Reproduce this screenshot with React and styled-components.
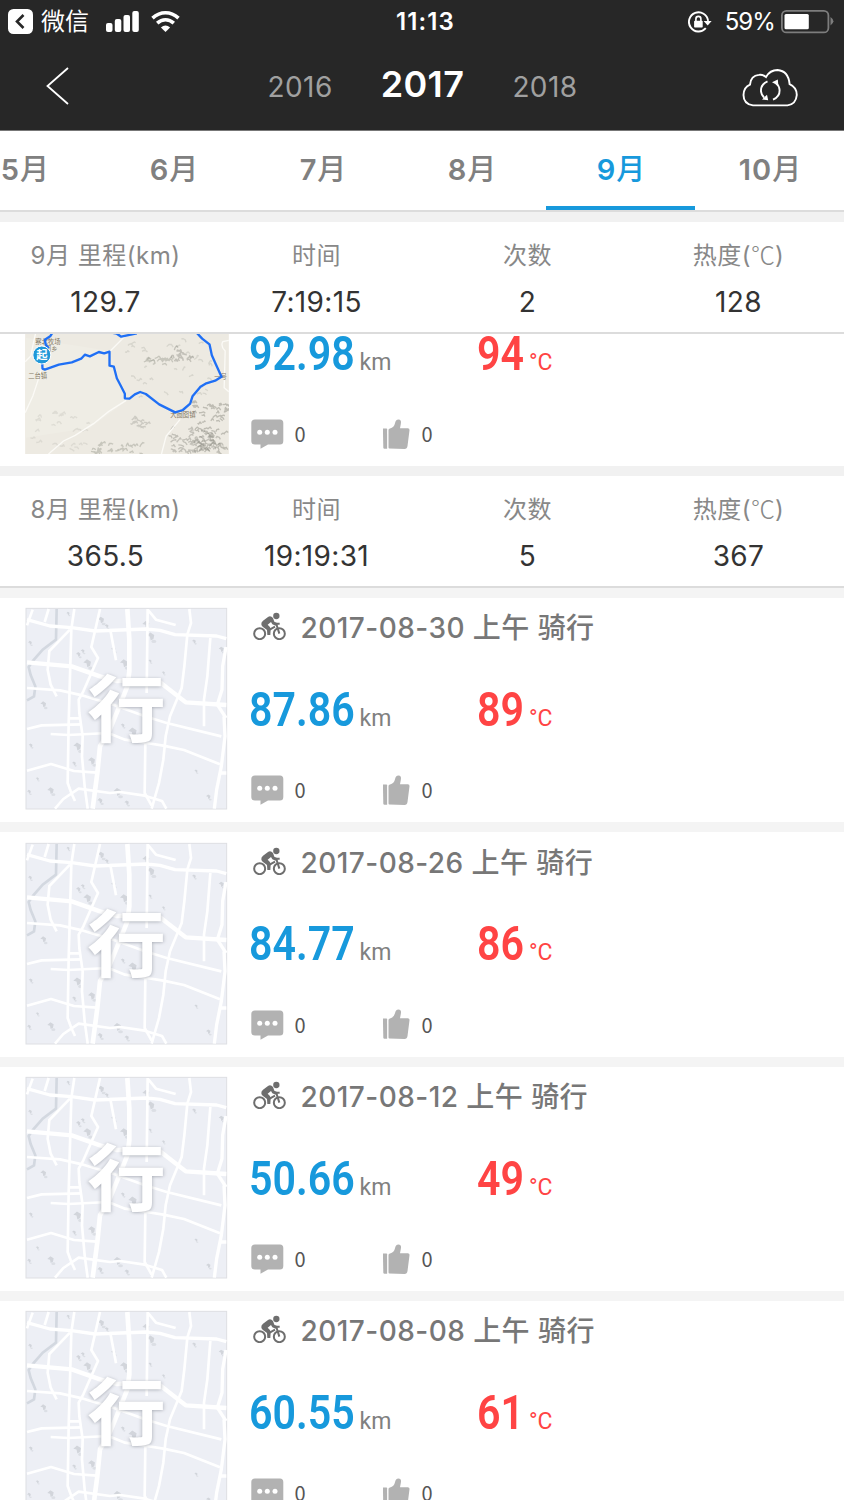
import styled, { createGlobalStyle } from 'styled-components';

const GlobalStyle = createGlobalStyle`
    * {
        box-sizing: border-box;
    }
    body {
        margin: 0;
        background: #fff;
        font-family: Inter, "Noto Sans CJK SC", sans-serif;
    }
    svg {
        display: block;
        flex-shrink: 0;
    }
`;

const Screen = styled.div`
    display: flex;
    flex-direction: column;
    width: 844px;
    height: 1500px;
    overflow: hidden;
    background: #fff;
`;

const DarkHeader = styled.header`
    height: 131px;
    background: #272727;
    border-bottom: 1px solid #777;
    color: #fff;
`;

const StatusBar = styled.div`
    display: grid;
    grid-template-columns: 1fr auto 1fr;
    align-items: center;
    height: 43px;
    padding: 0 10px 0 8px;
    font-size: 24px;
    line-height: 30px;
`;

const StatusSide = styled.div`
    display: flex;
    align-items: center;
    justify-content: ${(p) => (p.$end ? 'flex-end' : 'flex-start')};
`;

const BackApp = styled.span`
    margin: 0 17px 0 8px;
    font-weight: 400;
`;

const Clock = styled.span`
    padding-left: 9px;
    font-weight: 600;
    font-size: 24px;
    letter-spacing: 1.1px;
`;

const Percent = styled.span`
    margin: 0 6px 0 13px;
    font-size: 24px;
    letter-spacing: -0.9px;
`;

const NavBar = styled.nav`
    display: flex;
    align-items: center;
    justify-content: space-between;
    height: 86px;
    padding: 0 46px;
`;

const Years = styled.div`
    display: flex;
    align-items: baseline;
    gap: 48px;
    margin-left: 34px;
    margin-top: -1px;
`;

const Year = styled.span`
    font-size: ${(p) => (p.$active ? 36 : 28)}px;
    font-weight: ${(p) => (p.$active ? 600 : 400)};
    color: ${(p) => (p.$active ? '#fff' : '#a0a0a0')};
    letter-spacing: 0.4px;
    line-height: 42px;
`;

const MonthTabs = styled.div`
    display: flex;
    flex-shrink: 0;
    height: 81px;
    margin-left: -50px;
    border-bottom: 2px solid #dcdcdc;
`;

const MonthTab = styled.div`
    flex: 0 0 149px;
    padding: 21px 0 0 2px;
    border-bottom: 4px solid ${(p) => (p.$active ? '#1799dc' : 'transparent')};
    color: ${(p) => (p.$active ? '#1799dc' : '#808080')};
    font-size: 29px;
    font-weight: 600;
    line-height: 36px;
    text-align: center;
    letter-spacing: 1px;
`;

const MonthUnit = styled.span`
    font-weight: 500;
    font-size: 29px;
`;

const Gap = styled.div`
    flex-shrink: 0;
    height: 10px;
    background: ${(p) => (p.$light ? '#f4f4f4' : '#f1f1f1')};
`;

const SummaryPanel = styled.section`
    display: grid;
    grid-template-columns: repeat(4, 1fr);
    flex-shrink: 0;
    height: 112px;
    padding-top: 19px;
    border-bottom: 2px solid #dcdcdc;
    text-align: center;
`;

const SummaryLabel = styled.div`
    height: 30px;
    font-size: 24px;
    line-height: 30px;
    letter-spacing: 0.5px;
    color: #888;
    white-space: nowrap;
`;

const Degree = styled.span`
    font-family: "Noto Sans CJK SC", sans-serif;
    font-weight: 300;
    letter-spacing: 0;
    line-height: 1;
`;

const SummaryValue = styled.div`
    margin-top: 14px;
    font-size: 28px;
    line-height: 35px;
    letter-spacing: 0.35px;
    color: #333;
`;

const RideList = styled.main`
    flex: 1;
    min-height: 0;
    overflow: hidden;
`;

const ScrolledContent = styled.div`
    margin-top: -92.4px;
`;

const RideRow = styled.article`
    display: flex;
    height: 224.33px;
    padding: 9.5px 0 0 25px;
    background: #fff;
`;

const RideInfo = styled.div`
    margin: -1px 0 0 21px;
`;

const RideTitle = styled.div`
    display: flex;
    align-items: center;
    gap: 14.5px;
    height: 40px;
    padding-left: 4px;
    font-size: 28px;
    font-weight: 500;
    letter-spacing: 0.45px;
    color: #777;
    white-space: nowrap;
`;

const Stats = styled.div`
    display: grid;
    grid-template-columns: 111px 117px 53px auto;
    align-items: baseline;
    margin-top: 38.5px;
    height: 50px;
    font-family: Roboto, sans-serif;
    line-height: 50px;
`;

const BigNumber = styled.span`
    transform: scaleX(0.84);
    transform-origin: left;
    font-size: 49px;
    font-weight: 650;
    color: ${(p) => (p.$hot ? '#ff4444' : '#1799dc')};
    white-space: nowrap;
`;

const Unit = styled.span`
    margin-left: ${(p) => (p.$hot ? -1 : -0.5)}px;
    font-size: 23px;
    color: ${(p) => (p.$hot ? '#ff4444' : '#808080')};
`;

const Counts = styled.div`
    display: grid;
    grid-template-columns: 43.5px 88.5px 38.5px auto;
    align-items: center;
    margin-top: 39.5px;
    height: 32px;
    padding-left: 2px;
    font-family: "Noto Sans CJK SC", sans-serif;
    font-size: 20px;
    line-height: 32px;
    color: #555;
`;

const CityGlyph = styled.text`
    font-family: "Noto Sans CJK SC", sans-serif;
    font-size: 236px;
    font-weight: 700;
    fill: #fff;
    filter: drop-shadow(0 2px 6px rgba(110, 115, 125, 0.55));
`;

const MapLabel = styled.text`
    font-family: "Noto Sans CJK SC", sans-serif;
    font-size: 19px;
    fill: #857a66;
`;

const PinLabel = styled.text`
    font-family: "Noto Sans CJK SC", sans-serif;
    font-size: 34px;
    font-weight: 700;
    fill: #fff;
`;

// small repeatable generator for the hill shading
const makeHills = (seed, count, x, y, w, h) => {
    let s = seed;
    const next = () => {
        s = (s * 16807) % 2147483647;
        return s / 2147483647;
    };
    next();
    next();
    return Array.from({ length: count }, () => {
        const px = x + next() * w;
        const py = y + next() * h;
        const step = () => `l${(1 + next() * 7).toFixed(1)} ${(3 - next() * 10).toFixed(1)}`;
        return `M${px.toFixed(1)} ${py.toFixed(1)}${step()}${step()}l${(2 + next() * 3).toFixed(1)} ${(2 + next() * 6).toFixed(1)}`;
    }).join('');
};

const HILLS = [
    { d: makeHills(11011, 75, 575, 235, 100, 150), o: 0.4 },
    { d: makeHills(29017, 60, 505, 315, 160, 70), o: 0.36 },
    { d: makeHills(47051, 26, 270, 362, 150, 26), o: 0.32 },
    { d: makeHills(53077, 16, 510, 75, 90, 36), o: 0.36 },
    { d: makeHills(61031, 14, 430, 100, 80, 22), o: 0.32 },
    { d: makeHills(71093, 14, 390, 285, 80, 26), o: 0.28 },
    { d: makeHills(83047, 26, 90, 265, 170, 110), o: 0.14 },
    { d: makeHills(97003, 34, 370, 40, 260, 180), o: 0.18 },
];

const RouteMap = () => (
    <svg width="204" height="203" viewBox="75 -220 611 609" style={{ marginRight: -1 }}>
        <rect x="75" y="-220" width="611" height="609" fill="#edeae2" />
        <path d="M75 40L330 80L380 230L270 310L75 340Z" fill="#efede5" />
        {HILLS.map((hill) => (
            <path key={hill.d} d={hill.d} fill="none" stroke="#77786e" strokeWidth="4" opacity={hill.o} strokeLinejoin="round" />
        ))}
        <g fill="none" stroke="#fbfaf6" strokeWidth="4">
            <path d="M108 20Q98 60 92 95L75 112M125 130Q112 175 98 215L75 265" />
            <path d="M145 389L190 350L225 333L280 298L325 262L378 228M328 82L375 35" />
            <path d="M540 285L498 335L484 389M686 202L672 190L675 80Q660 65 668 52L686 48" />
        </g>
        <MapLabel x="105" y="58">察北牧场</MapLabel>
        <MapLabel x="134" y="79">图乡</MapLabel>
        <MapLabel x="84" y="162">二台镇</MapLabel>
        <MapLabel x="510" y="278">大囫囵镇</MapLabel>
        <MapLabel x="642" y="164">一号</MapLabel>
        <g fill="none" stroke="#1f6ff5" strokeWidth="7" strokeLinejoin="round">
            <path d="M160 20L150 36L134 46L137 62L146 72" />
            <path d="M126 112L127 133L134 136L176 121L215 114L243 103L254 91L269 96L296 83L312 87L328 82L328 124L341 127L350 162L361 183L374 208L374 222L388 223L404 210L420 203L437 209L477 240L525 264L548 257L570 238L577 216L601 187L616 178L645 169L664 157L647 120L635 93L628 60L606 43L580 15" />
            <path d="M330 24L350 28L363 37L410 27" />
        </g>
        <circle cx="125" cy="92" r="27" fill="#1f97d8" stroke="#fff" strokeWidth="3" />
        <PinLabel x="108" y="105">起</PinLabel>
    </svg>
);

const PATCHES = [
    [303, 92, 10], [438, 106, 11], [452, 142, 12], [340, 180, 7], [262, 222, 12], [372, 222, 12],
    [320, 110, 6], [582, 156, 6], [664, 180, 8], [90, 160, 6], [130, 345, 9], [398, 428, 13],
    [368, 408, 6], [232, 472, 12], [275, 515, 11], [222, 522, 6], [92, 468, 6], [112, 568, 5],
    [152, 604, 10], [352, 608, 12], [300, 634, 8], [380, 640, 7], [588, 545, 5], [625, 622, 7],
    [87, 607, 6], [235, 195, 7], [450, 215, 5], [204, 72, 5], [490, 250, 5], [248, 185, 6],
];

const CityMap = () => (
    <svg width="203" height="203" viewBox="75 52 609 609">
        <rect x="78" y="56" width="602" height="602" fill="#edeff5" stroke="#dedfe3" strokeWidth="3" />
        <g fill="#c9cdd3" opacity="0.75">
            {PATCHES.map(([x, y, r]) => (
                <path key={`${x}-${y}`} d={`M${x - r} ${y - r * 0.3}l${r * 0.9} ${-r * 0.8}l${r} ${r * 0.6}l${-r * 0.2} ${r}l${-r * 0.7} ${r * 0.4}l${-r * 0.2} ${-r}z`} />
            ))}
        </g>
        <g fill="#dcdfe5">
            {PATCHES.map(([x, y, r]) => (
                <ellipse key={`${x}-${y}`} cx={x + r * 0.8} cy={y + r * 1.1} rx={r * 0.6} ry={r * 0.4} />
            ))}
        </g>
        <path d="M170 58L168 150L128 180L100 212L86 232L92 256L106 290L102 320L81 332" fill="none" stroke="#d3d8e0" strokeWidth="8" />
        <g fill="none" stroke="#fff" strokeWidth="8" strokeLinejoin="round">
            <path d="M81 90L150 109L215 114L285 124L440 118L480 122L525 135L650 139L679 147" strokeWidth="10" />
            <path d="M98 60L81 107M146 58L134 97M223 58L214 118L206 400L203 580L214 610L225 634" />
            <path d="M210 120L148 184L143 240L152 285L170 320" />
            <path d="M300 58L285 124L274 172L294 205L250 305L236 330L238 370L248 440L246 500L254 590L263 657" />
            <path d="M382 58L388 150L388 245L382 290L350 370L325 430L300 470L292 550L278 657" strokeWidth="14" />
            <path d="M332 126L348 212M443 58L440 310M445 62L468 90L527 106" />
            <path d="M568 58L573 100L562 135L553 230L545 295L510 380L497 440L490 510L477 580L455 657" />
            <path d="M631 145L622 260L612 330L612 410" />
            <path d="M81 218L215 230L300 260L350 274L400 272L480 278L557 338L679 346" strokeWidth="13" />
            <path d="M81 295L180 302L250 318L340 345L435 380L500 400L664 440" />
            <path d="M81 418L125 407L245 404M210 386H242M152 433L205 436L325 430L375 450L440 460L490 468L552 481L660 524" />
            <path d="M81 543L153 523L222 544L290 549M436 460L434 610L455 648" />
            <path d="M165 657L190 628L236 597L330 610L360 607L434 618L486 634L499 657" />
            <path d="M678 172L668 230L666 300L652 345L678 385M672 380L675 440L664 530L650 600L643 657M660 550H679" strokeWidth="10" />
        </g>
        <CityGlyph x="262" y="476" transform="scale(1 0.92)">行</CityGlyph>
    </svg>
);

const CyclistIcon = () => (
    <svg width="33" height="28" viewBox="68 68 99 84">
        <g fill="none" stroke="#6e6e6e" strokeWidth="6">
            <circle cx="88" cy="133" r="16.5" />
            <circle cx="147" cy="133" r="16.5" />
            <path d="M147 133L138 104M134 103H148M118 121L134 112" />
        </g>
        <circle cx="138" cy="80" r="9.5" fill="#6e6e6e" />
        <path d="M93 105Q92 99 98 94L113 83Q121 78 128 86L132 97L140 101L136 109L126 105L122 98L112 106L118 112Q121 115 121 120L120 137H111L110 122L97 112Q93 109 93 105Z" fill="#6e6e6e" />
    </svg>
);

const CommentIcon = () => (
    <svg width="33" height="30" viewBox="0 0 33 30">
        <path d="M4 0.5H29Q32.3 0.5 32.3 4V22Q32.3 25.5 29 25.5H17L9.5 29.7V25.5H4Q0.3 25.5 0.3 22V4Q0.3 0.5 4 0.5Z" fill="#b2b2b2" />
        <g fill="#fff">
            <circle cx="8.7" cy="13.3" r="2.5" />
            <circle cx="16.3" cy="13.3" r="2.5" />
            <circle cx="24" cy="13.3" r="2.5" />
        </g>
    </svg>
);

const ThumbIcon = () => (
    <svg width="28" height="31" viewBox="0.5 0 28 31">
        <path d="M0.4 9.5H4Q4.6 9.5 4.6 10.3V29.7H2Q0.9 29.7 0.8 28.5Z" fill="#b2b2b2" />
        <path d="M6 11Q6 9.7 7.5 9.4Q11.5 8.5 12.5 4.2Q13 0.4 16 0.4Q19.3 0.4 18.3 5L17.5 9.3H25.3Q27.2 9.3 27 11.2L25 27Q24.6 30 22 30L7 29.6Q6 29.6 6 28.5Z" fill="#b2b2b2" />
    </svg>
);

const BackAppIcon = () => (
    <svg width="25" height="25" viewBox="0 0 25 25">
        <rect width="25" height="25" rx="5.5" fill="#fff" />
        <path d="M15.5 6L9 12.5L15.5 19" fill="none" stroke="#272727" strokeWidth="2.6" />
    </svg>
);

const SignalIcon = () => (
    <svg width="33" height="21" viewBox="0 0 33 21" fill="#fff">
        <rect y="12" width="6.5" height="9" rx="2" />
        <rect x="8.8" y="8" width="6.5" height="13" rx="2" />
        <rect x="17.5" y="4" width="6.5" height="17" rx="2" />
        <rect x="26.3" width="6.5" height="21" rx="2" />
    </svg>
);

const WifiIcon = () => (
    <svg width="29" height="21" viewBox="0 0 29 21" style={{ marginLeft: 12 }}>
        <g fill="none" stroke="#fff" strokeWidth="3.6">
            <path d="M1.5 7.2Q7.5 1.8 14.5 1.8T27.5 7.2" />
            <path d="M6.2 12.2Q10 8.8 14.5 8.8T22.8 12.2" />
        </g>
        <path d="M14.5 21L9.9 16.4Q12 14.6 14.5 14.6T19.1 16.4Z" fill="#fff" />
    </svg>
);

const RotationLockIcon = () => (
    <svg width="24" height="24" viewBox="0 0 24 24">
        <path d="M17.8 18.2A9.6 9.6 0 1 1 20.1 10.8" fill="none" stroke="#fff" strokeWidth="1.9" />
        <path d="M15.6 11H23.6L19.7 15.6Z" fill="#fff" />
        <rect x="6.1" y="10.8" width="8.6" height="6.8" rx="0.8" fill="#fff" />
        <path d="M7.9 11.3V8.9A2.5 2.5 0 0 1 12.9 8.9V11.3" fill="none" stroke="#fff" strokeWidth="1.6" />
    </svg>
);

const BatteryIcon = () => (
    <svg width="53" height="24" viewBox="0 0 53 24">
        <rect x="0.9" y="0.9" width="46.5" height="21.5" rx="4.5" fill="none" stroke="#7d7d7d" strokeWidth="1.8" />
        <path d="M49.5 7Q52.4 9 52.4 11.3T49.5 15.5Z" fill="#7d7d7d" />
        <rect x="3.5" y="4" width="24.3" height="15.2" rx="1.5" fill="#fff" />
    </svg>
);

const ChevronLeft = () => (
    <svg width="23" height="38" viewBox="0 0 23 38">
        <path d="M22 1L1.5 19L22 37" fill="none" stroke="#fff" strokeWidth="1.8" />
    </svg>
);

// cloud with two sync arrows inside
const CloudSync = () => (
    <svg width="56" height="41" viewBox="0 -3 56 41">
        <g fill="none" stroke="#fff" strokeWidth="1.9">
            <path d="M11 36.4Q1.5 35 1.5 26Q1.8 18 8 15.6Q8.8 6.6 17 5.9Q21 5.4 24 8Q28 1 35.5 1Q46.5 2 47.6 15.2Q54.8 18.5 54.8 26Q54 35.2 45.5 36.4Z" />
            <path d="M25.5 12.3Q18.5 15.5 19 22.5Q19.5 26 22 28.5" />
            <path d="M31 30.6Q37.8 27.6 37.6 21.2Q37.2 16.5 34 14.2" />
        </g>
        <path d="M20 30.6L26.2 31.2L25 25.8ZM30 13.3L35.8 10.6L36.4 16.8Z" fill="#fff" />
    </svg>
);

const Summary = ({ month, distance, time, count, heat }) => (
    <SummaryPanel>
        <div>
            <SummaryLabel>{month}月 里程(km)</SummaryLabel>
            <SummaryValue>{distance}</SummaryValue>
        </div>
        <div>
            <SummaryLabel>时间</SummaryLabel>
            <SummaryValue>{time}</SummaryValue>
        </div>
        <div>
            <SummaryLabel>次数</SummaryLabel>
            <SummaryValue>{count}</SummaryValue>
        </div>
        <div>
            <SummaryLabel>热度(<Degree>℃</Degree>)</SummaryLabel>
            <SummaryValue>{heat}</SummaryValue>
        </div>
    </SummaryPanel>
);

const Ride = ({ date, distance, heat, route }) => (
    <RideRow>
        {route ? <RouteMap /> : <CityMap />}
        <RideInfo>
            <RideTitle>
                {date && <CyclistIcon />}
                {date && <span>{date} 上午 骑行</span>}
            </RideTitle>
            <Stats>
                <BigNumber>{distance}</BigNumber>
                <Unit>km</Unit>
                <BigNumber $hot>{heat}</BigNumber>
                <Unit $hot>°C</Unit>
            </Stats>
            <Counts>
                <CommentIcon />
                <span>0</span>
                <ThumbIcon />
                <span>0</span>
            </Counts>
        </RideInfo>
    </RideRow>
);

const months = [5, 6, 7, 8, 9, 10];

const augustRides = [
    { date: '2017-08-30', distance: '87.86', heat: 89 },
    { date: '2017-08-26', distance: '84.77', heat: 86 },
    { date: '2017-08-12', distance: '50.66', heat: 49 },
    { date: '2017-08-08', distance: '60.55', heat: 61 },
];

const App = () => {
    return (
        <Screen>
            <GlobalStyle />
            <DarkHeader>
                <StatusBar>
                    <StatusSide>
                        <BackAppIcon />
                        <BackApp>微信</BackApp>
                        <SignalIcon />
                        <WifiIcon />
                    </StatusSide>
                    <Clock>11:13</Clock>
                    <StatusSide $end>
                        <RotationLockIcon />
                        <Percent>59%</Percent>
                        <BatteryIcon />
                    </StatusSide>
                </StatusBar>
                <NavBar>
                    <ChevronLeft />
                    <Years>
                        <Year>2016</Year>
                        <Year $active>2017</Year>
                        <Year>2018</Year>
                    </Years>
                    <CloudSync />
                </NavBar>
            </DarkHeader>
            <MonthTabs>
                {months.map((m) => (
                    <MonthTab key={m} $active={m === 9}>
                        {m}<MonthUnit>月</MonthUnit>
                    </MonthTab>
                ))}
            </MonthTabs>
            <Gap />
            <Summary month={9} distance="129.7" time="7:19:15" count={2} heat={128} />
            <RideList>
                <ScrolledContent>
                    <Ride route distance="92.98" heat={94} />
                    <Gap />
                    <Summary month={8} distance="365.5" time="19:19:31" count={5} heat={367} />
                    {augustRides.map((ride) => (
                        <div key={ride.date}>
                            <Gap $light />
                            <Ride {...ride} />
                        </div>
                    ))}
                </ScrolledContent>
            </RideList>
        </Screen>
    );
};

export default App;
